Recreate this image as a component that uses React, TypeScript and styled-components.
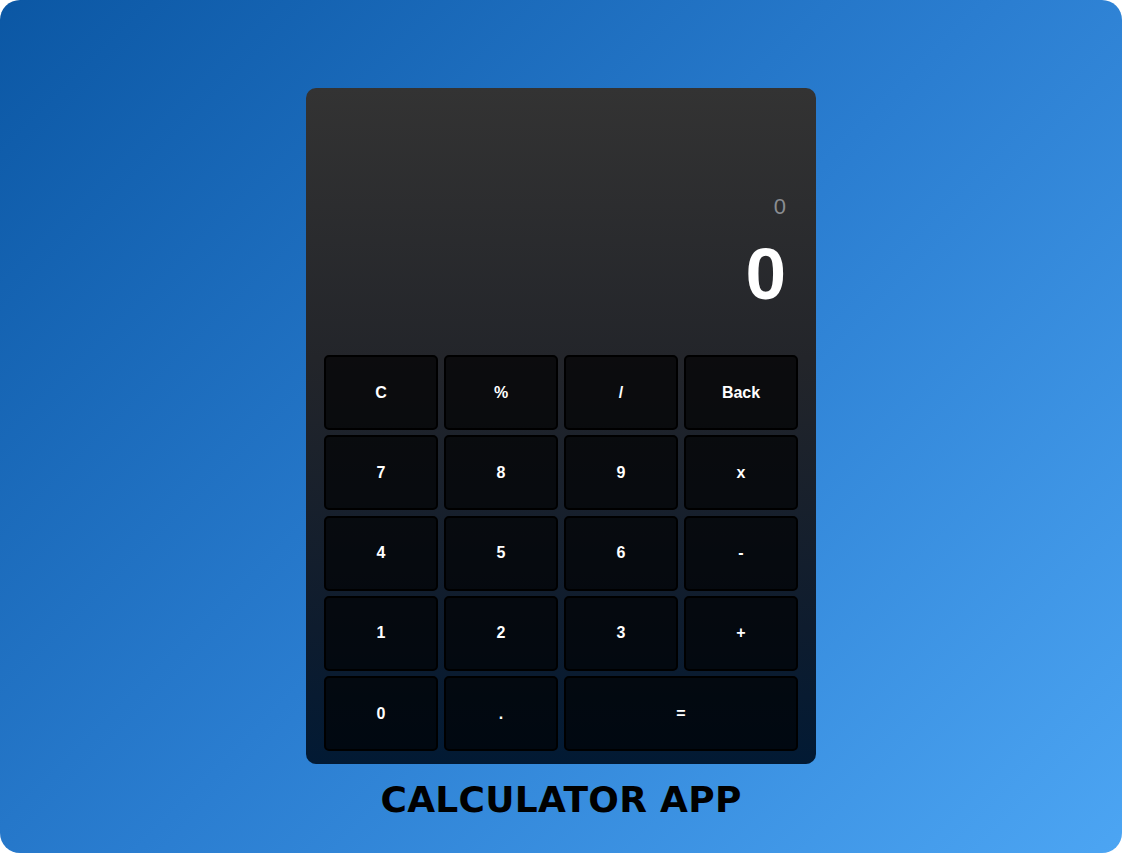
import styled, { createGlobalStyle } from 'styled-components';

const GlobalStyle = createGlobalStyle`
  html, body {
    margin: 0;
    padding: 0;
    background: #ffffff;
  }
  * { box-sizing: border-box; }
`;

const Page = styled.div`
  width: 1122px;
  height: 853px;
  border-radius: 20px;
  background: linear-gradient(135deg, #0b57a4 0%, #2a7dd0 50%, #4ca5f3 100%);
  display: flex;
  flex-direction: column;
  align-items: center;
  padding-top: 88px;
`;

const Calculator = styled.div`
  width: 510px;
  height: 676px;
  border-radius: 10px;
  background: linear-gradient(to bottom, #333333 0%, #23252a 40%, #0e1c2e 80%, #021a34 100%);
  display: flex;
  flex-direction: column;
  padding: 0 18px 13px 18px;
`;

const Display = styled.div`
  flex: 1;
  display: flex;
  flex-direction: column;
  align-items: flex-end;
  justify-content: flex-end;
  padding: 0 12px 44px 0;
  font-family: 'Liberation Sans', Arial, sans-serif;
`;

const History = styled.div`
  color: #8a8d92;
  font-size: 22px;
  line-height: 24px;
  margin-bottom: 18px;
`;

const Current = styled.div`
  color: #ffffff;
  font-size: 73px;
  font-weight: 700;
  line-height: 74px;
`;

const Keys = styled.div`
  display: grid;
  grid-template-columns: repeat(4, 1fr);
  grid-auto-rows: 75px;
  gap: 5.25px 6px;
`;

const Key = styled.button<{ $span?: number }>`
  grid-column: span ${(p) => p.$span ?? 1};
  background: rgba(0, 0, 0, 0.66);
  border: 2px solid #000;
  border-radius: 5px;
  color: #ffffff;
  font-family: 'Liberation Sans', Arial, sans-serif;
  font-weight: 700;
  font-size: 16px;
  cursor: pointer;
`;

const Title = styled.h1`
  margin: 14px 0 0;
  font-family: 'DejaVu Sans', 'Liberation Sans', sans-serif;
  font-weight: 700;
  font-size: 36px;
  line-height: 44px;
  color: #000;
  letter-spacing: 0.3px;
`;

const keys: { label: string; span?: number }[] = [
  { label: 'C' }, { label: '%' }, { label: '/' }, { label: 'Back' },
  { label: '7' }, { label: '8' }, { label: '9' }, { label: 'x' },
  { label: '4' }, { label: '5' }, { label: '6' }, { label: '-' },
  { label: '1' }, { label: '2' }, { label: '3' }, { label: '+' },
  { label: '0' }, { label: '.' }, { label: '=', span: 2 },
];

const App = () => {
  return (
    <>
      <GlobalStyle />
      <Page>
        <Calculator>
          <Display>
            <History>0</History>
            <Current>0</Current>
          </Display>
          <Keys>
            {keys.map((k) => (
              <Key key={k.label} $span={k.span}>
                {k.label}
              </Key>
            ))}
          </Keys>
        </Calculator>
        <Title>CALCULATOR APP</Title>
      </Page>
    </>
  );
};

export default App;
